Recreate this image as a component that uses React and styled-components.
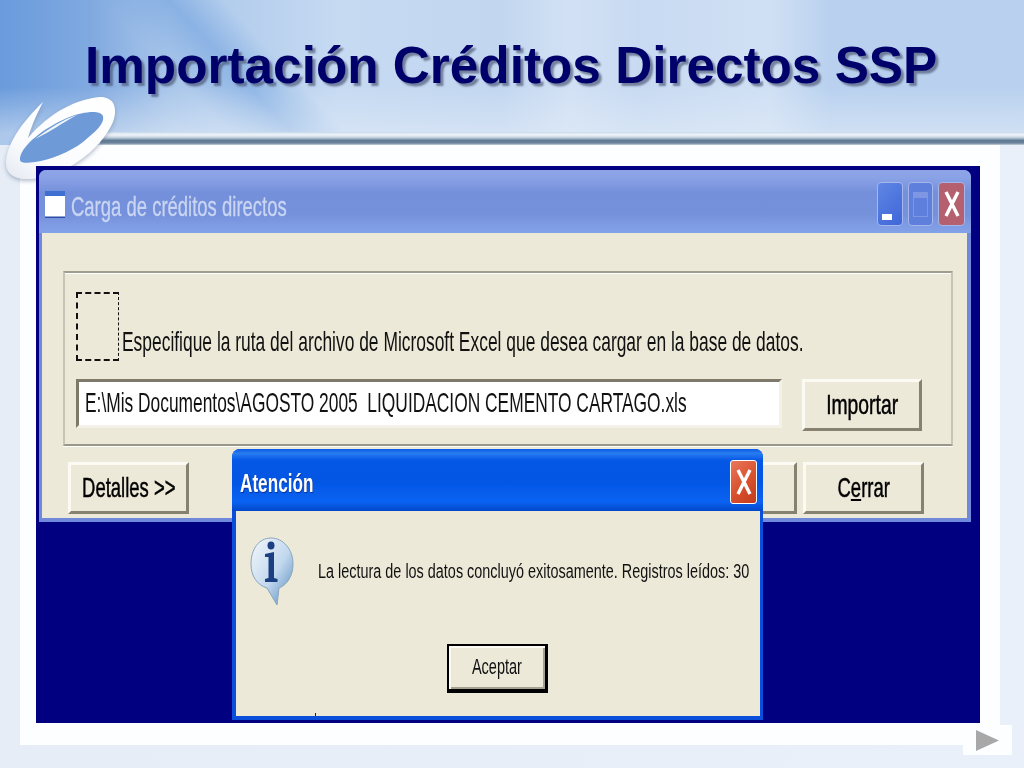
import React from 'react';
import styled, { createGlobalStyle } from 'styled-components';

const Global = createGlobalStyle`
  html, body { margin: 0; padding: 0; background: #e8eff8; }
  body { font-family: "Liberation Sans", Arial, sans-serif; }
`;

const Slide = styled.div`
  position: relative;
  width: 1024px;
  height: 768px;
  overflow: hidden;
  background: linear-gradient(90deg, #e6edf7 0, #eaf0f9 100%);
`;

const Header = styled.header`
  height: 145px;
  box-sizing: border-box;
  display: flex;
  flex-direction: column;
  background:
    linear-gradient(180deg, rgba(230,238,248,0) 60%, rgba(226,236,247,.55) 92%),
    linear-gradient(47deg, rgba(110,160,222,0) 175px, rgba(110,160,222,.55) 222px, rgba(110,160,222,0) 262px),
    linear-gradient(90deg, #6a9bdc 0, #80a9e0 90px, #a9c6ea 170px, #c6daf2 340px, #c2d6f0 500px, #d2e1f4 570px, #c8daf2 640px, #d0e0f4 770px, #b9d1ef 830px, #b9d1ee 100%);
`;

const Title = styled.h1`
  margin: 37px 0 0 85px;
  font-size: 51.3px;
  line-height: 58px;
  font-weight: 700;
  color: #00006b;
  white-space: nowrap;
  text-shadow: 3px 3px 2px rgba(70, 80, 110, .65);
`;

const HeaderRule = styled.div`
  margin: auto 0 0 100px;
  height: 13px;
  background: linear-gradient(180deg, #c9d9ea 0, #f0f5fa 22%, #c4d1df 42%, #5e7892 66%, #6d849c 85%, #c8d2dc 100%);
`;

const Stage = styled.main`
  width: 980px;
  height: 600px;
  margin-left: 20px;
  box-sizing: border-box;
  padding: 21px 20px 22px 16px;
  background: #fdfeff;
`;

const Screen = styled.section`
  position: relative;
  z-index: 1;
  height: 557px;
  box-sizing: border-box;
  padding: 4px 9px 0 3px;
  background: #000080;
`;

const XpWindow = styled.div`
  height: 352px;
  display: flex;
  flex-direction: column;
  border-radius: 7px 7px 0 0;
  background: #7189da;
`;

const TitleBar = styled.div`
  height: 63px;
  flex: none;
  box-sizing: border-box;
  display: flex;
  align-items: center;
  padding: 5px 6px 0 6px;
  border-radius: 7px 7px 0 0;
  background: linear-gradient(180deg, #8ea6e6 0, #8aa2e6 12%, #7590db 35%, #7591dc 70%, #84a2e8 100%);
`;

const Squeeze = styled.span`
  display: inline-block;
  white-space: pre;
  transform-origin: left center;
  transform: scaleX(${p => p.$sx});
  width: ${p => (p.$w ? `${p.$w}px` : 'max-content')};
  font-size: ${p => p.$size}px;
  line-height: 1.1;
`;

const WinTitle = styled(Squeeze)`
  margin: 7px 0 0 6px;
  color: #c9d5f2;
  flex: 1;
  -webkit-text-stroke: .3px #c9d5f2;
`;

const WinIcon = () => (
  <svg width="20" height="27" viewBox="0 0 20 27">
    <rect width="20" height="27" fill="#fff" />
    <rect width="20" height="5" fill="#3f6fd0" />
    <rect y="25.5" width="20" height="1.5" fill="#2d4da8" />
  </svg>
);

const CtlButton = styled.div`
  width: ${p => p.$w}px;
  height: 44px;
  margin-left: 5px;
  box-sizing: border-box;
  display: flex;
  align-items: center;
  justify-content: center;
  border: 1px solid #a5b6ea;
  border-radius: 4px;
  background: ${p => p.$bg};
`;

const Minimize = styled.span`
  width: 10px;
  height: 6px;
  margin: 26px 6px 0 0;
  background: #fff;
`;

const Maximize = styled.span`
  width: 15px;
  height: 25px;
  box-sizing: border-box;
  border: 1px solid #7f97e2;
  border-top-width: 6px;
`;

const WinBody = styled.div`
  flex: 1;
  margin: 0 4px 4px 3px;
  box-sizing: border-box;
  padding: 38px 0 0 21px;
  background: #ece9d8;
`;

const Group = styled.div`
  width: 890px;
  height: 175px;
  box-sizing: border-box;
  padding: 19px 0 0 11px;
  border: 2px solid #fdfdf8;
  border-top-color: #a09d8e;
  border-left-color: #c8c5b6;
  border-bottom-color: #9a9788;
  border-right-color: #c8c5b6;
  box-shadow: inset 0 1px 0 #fff, 0 1px 0 #fff;
`;

const HintRow = styled.div`
  display: flex;
  align-items: flex-end;
`;

const DashBox = styled.div`
  width: 43px;
  height: 69px;
  flex: none;
  box-sizing: border-box;
  border: 2px dashed #111;
  border-right-width: 1px;
`;

const Hint = styled(Squeeze)`
  margin: 0 0 3px 3px;
  color: #111;
`;

const PathRow = styled.div`
  display: flex;
  margin-top: 18px;
`;

const PathField = styled.div`
  width: 706px;
  height: 49px;
  box-sizing: border-box;
  display: flex;
  align-items: center;
  padding-left: 6px;
  background: #fff;
  border: 3px solid #f4f2e8;
  border-top-color: #7d7a6c;
  border-left-color: #7d7a6c;
  color: #111;
`;

const EtchedButton = styled.div`
  width: ${p => p.$w}px;
  height: ${p => p.$h}px;
  flex: none;
  box-sizing: border-box;
  display: flex;
  align-items: center;
  justify-content: center;
  background: #ece9d8;
  color: #000;
  border: 3px solid #fbfaf3;
  border-right-color: #86826f;
  border-bottom-color: #86826f;
`;

const ImportButton = styled(EtchedButton)`
  margin-left: 20px;
`;

const Footer = styled.div`
  display: flex;
  margin: 16px 0 0 5px;
`;

const FooterRight = styled.div`
  display: flex;
  gap: 6px;
  margin-left: auto;
  margin-right: 43px;
`;

const BtnText = styled(Squeeze)`
  flex: none;
  transform-origin: center center;
  -webkit-text-stroke: .5px #000;
`;

const Dialog = styled.div`
  position: absolute;
  z-index: 2;
  left: 232px;
  top: 449px;
  width: 531px;
  height: 271px;
  display: flex;
  flex-direction: column;
  border-radius: 8px 8px 0 0;
  background: #0a4fdc;
`;

const DialogBar = styled.div`
  height: 62px;
  flex: none;
  box-sizing: border-box;
  display: flex;
  align-items: center;
  padding: 0 6px 0 8px;
  border-radius: 8px 8px 0 0;
  background: linear-gradient(180deg, #0a5ae6 0, #2a7cf0 7%, #0558e6 18%, #0355e4 50%, #0a63f2 85%, #0347c8 100%);
`;

const DialogTitle = styled(Squeeze)`
  flex: 1;
  margin-top: 6px;
  color: #fff;
  font-weight: 700;
  text-shadow: 1px 1px 1px #0a2c90;
`;

const DialogClose = styled.div`
  width: 27px;
  height: 44px;
  margin-top: 4px;
  box-sizing: border-box;
  display: flex;
  align-items: center;
  justify-content: center;
  border: 1px solid #fff;
  border-radius: 3px;
  background: linear-gradient(135deg, #e8785c 0, #d9502c 55%, #c23c1c 100%);
`;

const DialogBody = styled.div`
  position: relative;
  flex: 1;
  margin: 0 3px 4px 4px;
  box-sizing: border-box;
  padding: 26px 0 0 14px;
  display: flex;
  flex-direction: column;
  background: #ece9d8;
`;

const MessageRow = styled.div`
  display: flex;
  align-items: center;
`;

const Message = styled(Squeeze)`
  margin: -2px 0 0 24px;
  color: #111;
`;

const AcceptButton = styled.div`
  width: 101px;
  height: 49px;
  margin: 37px 0 0 197px;
  box-sizing: border-box;
  display: flex;
  align-items: center;
  justify-content: center;
  background: #ece9d8;
  border: 2px solid #000;
  border-bottom-width: 4px;
  border-right-width: 3px;
  box-shadow: inset 2px 2px 0 #fbfaf3, inset -2px -2px 0 #a5a290;
`;

const AcceptText = styled(Squeeze)`
  flex: none;
  transform-origin: center center;
  color: #111;
`;

const StrayTick = styled.span`
  position: absolute;
  left: 79px;
  bottom: 0;
  width: 1px;
  height: 3px;
  background: #222;
`;

const NextButton = styled.div`
  position: absolute;
  left: 963px;
  top: 725px;
  width: 49px;
  height: 30px;
  display: flex;
  align-items: center;
  justify-content: center;
  background: #fdfeff;
`;

const Swoosh = styled.svg`
  position: absolute;
  left: 0;
  top: 90px;
  filter: drop-shadow(0 2px 2px rgba(90, 110, 140, .45));
`;

const CloseGlyph = ({ size = 22 }) => (
  <svg width={size * 0.8} height={size * 1.3} viewBox="0 0 16 26">
    <path d="M2 1 L14 25 M14 1 L2 25" stroke="#fff" strokeWidth="3.4" fill="none" />
  </svg>
);

const InfoIcon = () => (
  <svg width="44" height="70" viewBox="0 0 44 70">
    <defs>
      <linearGradient id="bub" x1="0" y1="0" x2="1" y2="1">
        <stop offset="0" stopColor="#f4f7fb" />
        <stop offset=".55" stopColor="#c2d8ee" />
        <stop offset="1" stopColor="#4f86bc" />
      </linearGradient>
    </defs>
    <path d="M21 1 C33 1 43 12 43 27 C43 39 37 48 29 51 L27 68 L17 51 C7 48 1 39 1 27 C1 12 9 1 21 1 Z" fill="url(#bub)" stroke="#8aa5bd" strokeWidth="1" />
    <ellipse cx="21" cy="8.5" rx="3.5" ry="4" fill="#1b3f80" />
    <path d="M15 17 L24 15 L24 41 L27.5 42 L27.5 45 L15 45 L15 42 L18.5 41 L18.5 20 L15 20 Z" fill="#1b3f80" />
  </svg>
);

export default function App() {
  return (
    <Slide>
      <Global />
      <Header>
        <Title>Importación Créditos Directos SSP</Title>
        <HeaderRule />
      </Header>
      <Swoosh width="125" height="100" viewBox="0 0 125 100">
        <defs>
          <linearGradient id="ring" x1="0" y1="1" x2="1" y2="0">
            <stop offset="0" stopColor="#e4e9f1" />
            <stop offset=".3" stopColor="#fbfcfe" />
            <stop offset="1" stopColor="#ffffff" />
          </linearGradient>
        </defs>
        <path d="M43 12 C22 32 6 55 6 73 C6 85 16 90 32 89 C62 87 100 62 113 32 C118 18 114 8 102 7 C78 8 50 22 28 48 C32 34 38 22 43 12 Z" fill="url(#ring)" />
        <path d="M20 68 C22 55 44 38 67 28 C85 21 100 20 103 26 C105 34 95 42 83 52 C70 62 50 70 35 72 C26 73 19 74 20 68 Z" fill="#6e9bd8" />
        <path d="M35 49 C50 38 62 30 77 25 C62 33 50 42 35 49 Z" fill="#f0f5fb" />
      </Swoosh>
      <Stage>
        <Screen>
          <XpWindow>
            <TitleBar>
              <WinIcon />
              <WinTitle $size={28} $sx={0.66} $w={700}>Carga de créditos directos</WinTitle>
              <CtlButton $w={26} $bg="linear-gradient(135deg,#5f86e4,#3f66d8)"><Minimize /></CtlButton>
              <CtlButton $w={25} $bg="#5f7fdc"><Maximize /></CtlButton>
              <CtlButton $w={27} $bg="#b5606e"><CloseGlyph size={20} /></CtlButton>
            </TitleBar>
            <WinBody>
              <Group>
                <HintRow>
                  <DashBox />
                  <Hint $size={28} $sx={0.622} $w={760}>Especifique la ruta del archivo de Microsoft Excel que desea cargar en la base de datos.</Hint>
                </HintRow>
                <PathRow>
                  <PathField>
                    <Squeeze $size={28} $sx={0.62} $w={680}>E:\Mis Documentos\AGOSTO 2005  LIQUIDACION CEMENTO CARTAGO.xls</Squeeze>
                  </PathField>
                  <ImportButton $w={120} $h={52}>
                    <BtnText $size={28} $sx={0.69}>Importar</BtnText>
                  </ImportButton>
                </PathRow>
              </Group>
              <Footer>
                <EtchedButton $w={121} $h={52}>
                  <BtnText $size={28} $sx={0.66}>Detalles &gt;&gt;</BtnText>
                </EtchedButton>
                <FooterRight>
                  <EtchedButton $w={121} $h={52} />
                  <EtchedButton $w={121} $h={52}>
                    <BtnText $size={28} $sx={0.66}>C<u>e</u>rrar</BtnText>
                  </EtchedButton>
                </FooterRight>
              </Footer>
            </WinBody>
          </XpWindow>
        </Screen>
      </Stage>
      <Dialog>
        <DialogBar>
          <DialogTitle $size={26} $sx={0.66} $w={400}>Atención</DialogTitle>
          <DialogClose><CloseGlyph size={20} /></DialogClose>
        </DialogBar>
        <DialogBody>
          <MessageRow>
            <InfoIcon />
            <Message $size={20} $sx={0.721} $w={440}>La lectura de los datos concluyó exitosamente. Registros leídos: 30</Message>
          </MessageRow>
          <AcceptButton>
            <AcceptText $size={22} $sx={0.66}>Aceptar</AcceptText>
          </AcceptButton>
          <StrayTick />
        </DialogBody>
      </Dialog>
      <NextButton>
        <svg width="23" height="21" viewBox="0 0 23 21"><path d="M0 0 L23 10.5 L0 21 Z" fill="#a8a8a8" /></svg>
      </NextButton>
    </Slide>
  );
}
